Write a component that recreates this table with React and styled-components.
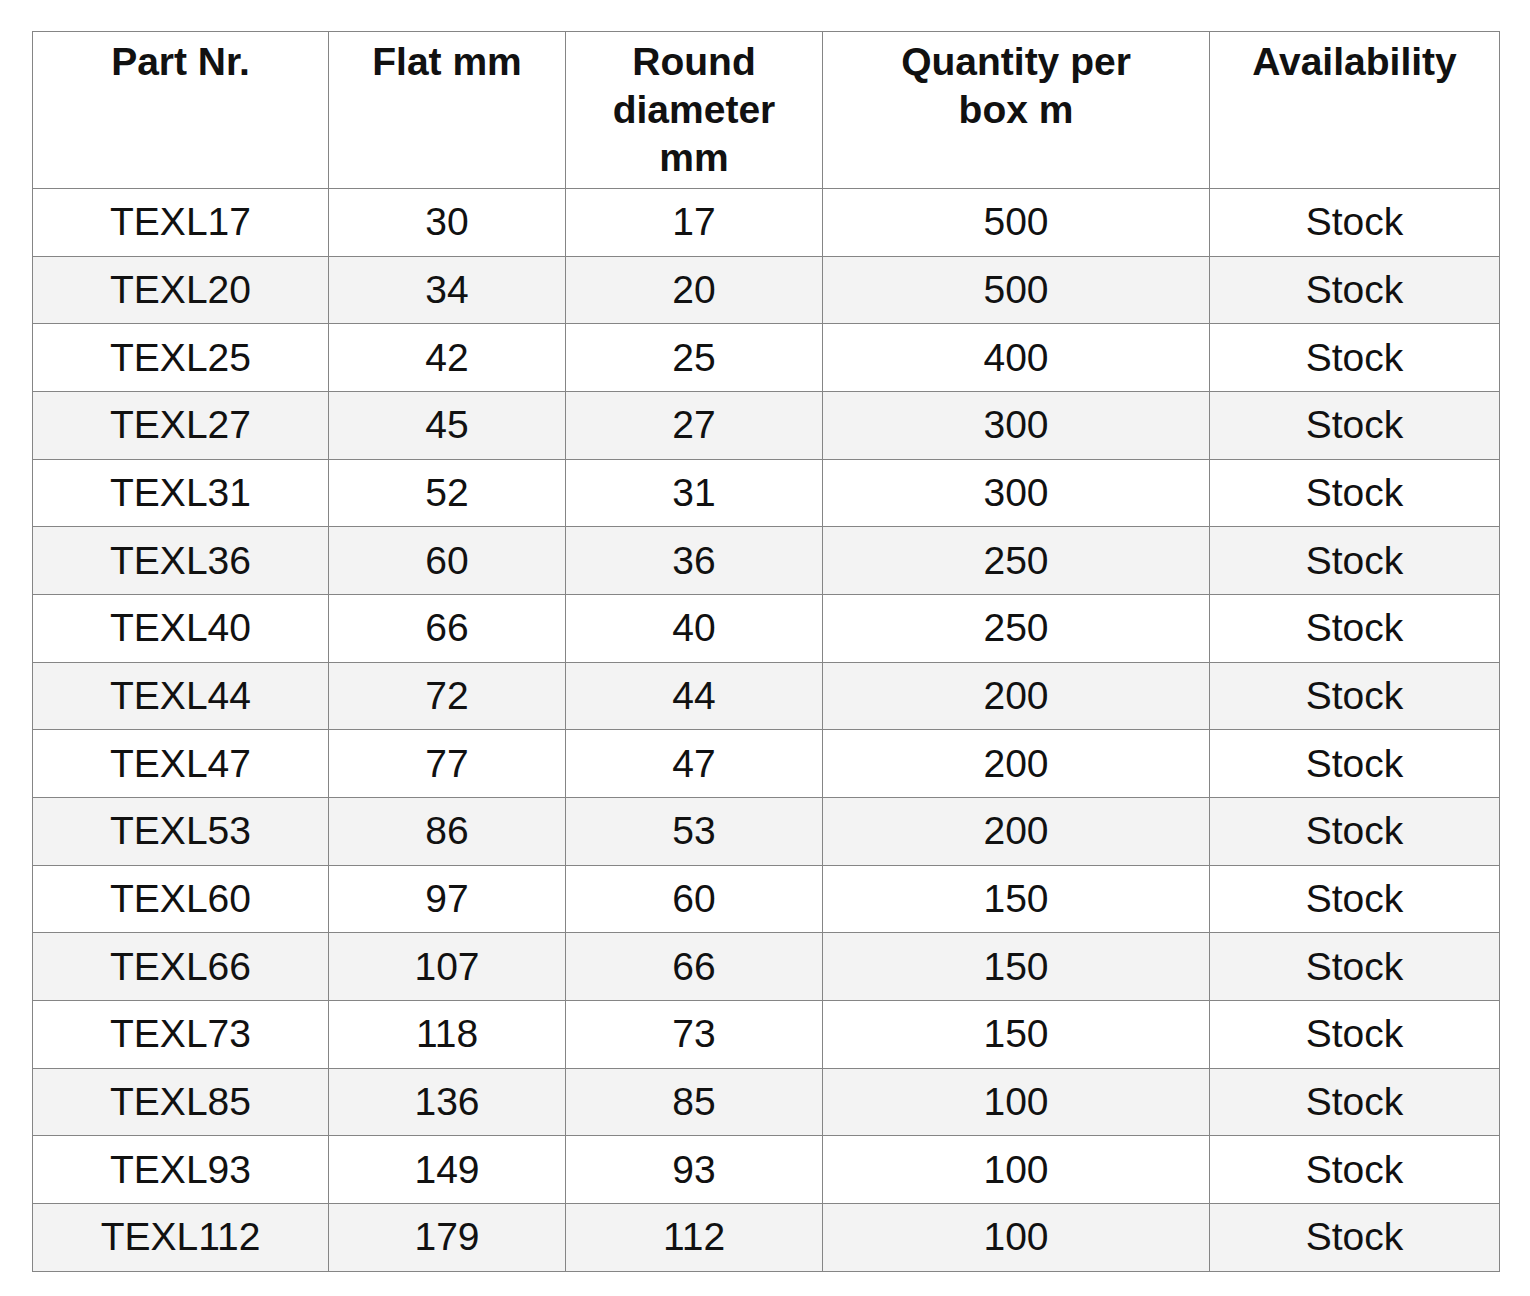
import styled, { createGlobalStyle } from "styled-components"

const GlobalStyle = createGlobalStyle`
  body {
    margin: 0;
    background: #fff;
    font-family: "Liberation Sans", Arial, sans-serif;
  }
`

const columns = [
    { lines: ["Part Nr."], width: 296 },
    { lines: ["Flat mm"], width: 237 },
    { lines: ["Round", "diameter", "mm"], width: 257 },
    { lines: ["Quantity per", "box m"], width: 387 },
    { lines: ["Availability"], width: 290 },
]

const rows = [
    ["TEXL17", 30, 17, 500],
    ["TEXL20", 34, 20, 500],
    ["TEXL25", 42, 25, 400],
    ["TEXL27", 45, 27, 300],
    ["TEXL31", 52, 31, 300],
    ["TEXL36", 60, 36, 250],
    ["TEXL40", 66, 40, 250],
    ["TEXL44", 72, 44, 200],
    ["TEXL47", 77, 47, 200],
    ["TEXL53", 86, 53, 200],
    ["TEXL60", 97, 60, 150],
    ["TEXL66", 107, 66, 150],
    ["TEXL73", 118, 73, 150],
    ["TEXL85", 136, 85, 100],
    ["TEXL93", 149, 93, 100],
    ["TEXL112", 179, 112, 100],
]

const App = () => {
    return (
        <Page>
            <GlobalStyle />
            <Table>
                <colgroup>
                    {columns.map((col) => (
                        <col key={col.lines.join(" ")} style={{ width: col.width }} />
                    ))}
                </colgroup>
                <thead>
                    <tr>
                        {columns.map((col) => (
                            <HeadCell key={col.lines.join(" ")}>
                                {col.lines.map((line) => (
                                    <HeadLine key={line}>{line}</HeadLine>
                                ))}
                            </HeadCell>
                        ))}
                    </tr>
                </thead>
                <tbody>
                    {rows.map((row, index) => (
                        <Row key={row[0]} $shaded={index % 2 === 1}>
                            <Cell>{row[0]}</Cell>
                            <Cell>{row[1]}</Cell>
                            <Cell>{row[2]}</Cell>
                            <Cell>{row[3]}</Cell>
                            <Cell>Stock</Cell>
                        </Row>
                    ))}
                </tbody>
            </Table>
        </Page>
    )
}

const Page = styled.div`
  padding: 31px 0 0 32px;
`

const Table = styled.table`
  border-collapse: collapse;
  table-layout: fixed;
  width: 1468px;
  color: #111;
  font-size: 39px;
`

const HeadCell = styled.th`
  border: 1px solid #858585;
  vertical-align: top;
  text-align: center;
  font-weight: bold;
  line-height: 48px;
  height: 156px;
  box-sizing: border-box;
  padding: 6px 10px;
`

const HeadLine = styled.div`
  white-space: nowrap;
`

const Row = styled.tr`
  height: 67.66px;
  background: ${(p) => (p.$shaded ? "#f3f3f3" : "#fff")};
`

const Cell = styled.td`
  border: 1px solid #858585;
  text-align: center;
  vertical-align: middle;
  padding: 0;
  line-height: 44px;
`

export default App
